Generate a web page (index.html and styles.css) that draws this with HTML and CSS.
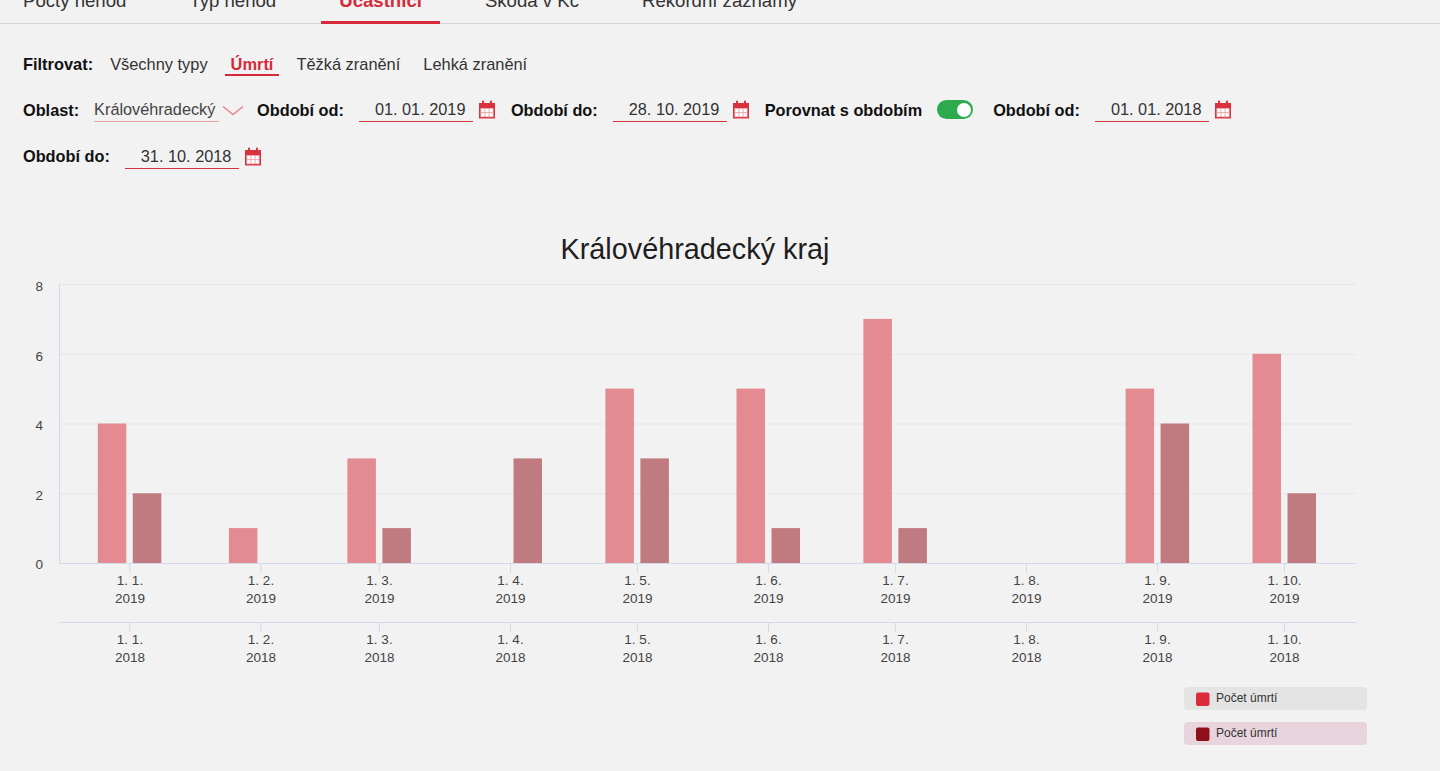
FILE: index.html
```html
<!DOCTYPE html>
<html lang="cs">
<head>
<meta charset="utf-8">
<title>Účastníci</title>
<link rel="stylesheet" href="styles.css">
</head>
<body>
<nav class="tabs">
  <a class="tab"><span>Počty nehod</span></a>
  <a class="tab"><span>Typ nehod</span></a>
  <a class="tab active"><span>Účastníci</span></a>
  <a class="tab"><span>Škoda v Kč</span></a>
  <a class="tab"><span>Rekordní záznamy</span></a>
</nav>

<div class="content">
  <div class="filter">
    <span class="filter-label">Filtrovat:</span>
    <span class="filter-item">Všechny typy</span>
    <span class="filter-item active">Úmrtí</span>
    <span class="filter-item">Těžká zranění</span>
    <span class="filter-item">Lehká zranění</span>
  </div>

  <div class="controls">
    <div class="field">
      <span class="label">Oblast:</span>
      <span class="select-group">
        <span class="select">Královéhradecký</span>
        <svg class="chevron" width="22" height="11" viewBox="0 0 22 11"><polyline points="1,1.5 11,9.5 21,1.5" fill="none" stroke="#e8858e" stroke-width="1.6"/></svg>
      </span>
    </div>

    <div class="field">
      <span class="label">Období od:</span>
      <span class="date-group">
        <span class="date">01. 01. 2019</span>
        <svg class="cal" width="18" height="19" viewBox="0 0 18 19"><use href="#cal"/></svg>
      </span>
    </div>

    <div class="field">
      <span class="label">Období do:</span>
      <span class="date-group">
        <span class="date">28. 10. 2019</span>
        <svg class="cal" width="18" height="19" viewBox="0 0 18 19"><use href="#cal"/></svg>
      </span>
    </div>

    <div class="field">
      <span class="label">Porovnat s obdobím</span>
      <span class="toggle"><span class="knob"></span></span>
    </div>

    <div class="field">
      <span class="label">Období od:</span>
      <span class="date-group">
        <span class="date">01. 01. 2018</span>
        <svg class="cal" width="18" height="19" viewBox="0 0 18 19"><use href="#cal"/></svg>
      </span>
    </div>

    <div class="field">
      <span class="label">Období do:</span>
      <span class="date-group">
        <span class="date">31. 10. 2018</span>
        <svg class="cal" width="18" height="19" viewBox="0 0 18 19"><use href="#cal"/></svg>
      </span>
    </div>
  </div>
</div>

<svg class="defs" width="0" height="0">
  <defs>
    <g id="cal">
      <rect x="1" y="3" width="16" height="15.5" fill="#d9323f"/>
      <rect x="2.3" y="8" width="13.4" height="9.2" fill="#eaa0a6"/>
      <rect x="3.2" y="8.9" width="3.3" height="3.3" fill="#fff"/>
      <rect x="7.35" y="8.9" width="3.3" height="3.3" fill="#fff"/>
      <rect x="11.5" y="8.9" width="3.3" height="3.3" fill="#fff"/>
      <rect x="3.2" y="13.1" width="3.3" height="3.3" fill="#fff"/>
      <rect x="7.35" y="13.1" width="3.3" height="3.3" fill="#fff"/>
      <rect x="11.5" y="13.1" width="3.3" height="3.3" fill="#fff"/>
      <rect x="4" y="0.5" width="2" height="4.5" rx="0.8" fill="#d9323f"/>
      <rect x="12" y="0.5" width="2" height="4.5" rx="0.8" fill="#d9323f"/>
    </g>
  </defs>
</svg>

<svg class="chart" width="1440" height="581" viewBox="0 190 1440 581">
  <text class="title" x="695" y="260" text-anchor="middle">Královéhradecký kraj</text>

  <g class="grid">
    <line x1="59" y1="285.5" x2="1356" y2="285.5"/>
    <line x1="59" y1="355.25" x2="1356" y2="355.25"/>
    <line x1="59" y1="425" x2="1356" y2="425"/>
    <line x1="59" y1="494.75" x2="1356" y2="494.75"/>
  </g>
  <line class="axis" x1="59.5" y1="285" x2="59.5" y2="564"/>

  <g class="ylabels">
    <text x="43" y="292">8</text>
    <text x="43" y="362">6</text>
    <text x="43" y="431">4</text>
    <text x="43" y="501">2</text>
    <text x="43" y="570">0</text>
  </g>

  <g class="s1">
    <rect x="97.8" y="424.5" width="28.5" height="139.5"/>
    <rect x="228.9" y="529.1" width="28.5" height="34.9"/>
    <rect x="347.4" y="459.4" width="28.5" height="104.6"/>
    <rect x="605.4" y="389.6" width="28.5" height="174.4"/>
    <rect x="736.5" y="389.6" width="28.5" height="174.4"/>
    <rect x="863.4" y="319.9" width="28.5" height="244.1"/>
    <rect x="1125.6" y="389.6" width="28.5" height="174.4"/>
    <rect x="1252.5" y="354.75" width="28.5" height="209.25"/>
  </g>
  <g class="s2">
    <rect x="132.8" y="494.25" width="28.5" height="69.75"/>
    <rect x="382.4" y="529.1" width="28.5" height="34.9"/>
    <rect x="513.5" y="459.4" width="28.5" height="104.6"/>
    <rect x="640.4" y="459.4" width="28.5" height="104.6"/>
    <rect x="771.5" y="529.1" width="28.5" height="34.9"/>
    <rect x="898.4" y="529.1" width="28.5" height="34.9"/>
    <rect x="1160.6" y="424.5" width="28.5" height="139.5"/>
    <rect x="1287.5" y="494.25" width="28.5" height="69.75"/>
  </g>

  <line class="axis" x1="59" y1="564.5" x2="1356" y2="564.5"/>
  <line class="axis" x1="59" y1="623.5" x2="1356" y2="623.5"/>

  <g class="ticks">
    <line x1="129.8" y1="564" x2="129.8" y2="574"/>
    <line x1="260.9" y1="564" x2="260.9" y2="574"/>
    <line x1="379.4" y1="564" x2="379.4" y2="574"/>
    <line x1="510.5" y1="564" x2="510.5" y2="574"/>
    <line x1="637.4" y1="564" x2="637.4" y2="574"/>
    <line x1="768.5" y1="564" x2="768.5" y2="574"/>
    <line x1="895.4" y1="564" x2="895.4" y2="574"/>
    <line x1="1026.5" y1="564" x2="1026.5" y2="574"/>
    <line x1="1157.6" y1="564" x2="1157.6" y2="574"/>
    <line x1="1284.5" y1="564" x2="1284.5" y2="574"/>

    <line x1="129.8" y1="623" x2="129.8" y2="633"/>
    <line x1="260.9" y1="623" x2="260.9" y2="633"/>
    <line x1="379.4" y1="623" x2="379.4" y2="633"/>
    <line x1="510.5" y1="623" x2="510.5" y2="633"/>
    <line x1="637.4" y1="623" x2="637.4" y2="633"/>
    <line x1="768.5" y1="623" x2="768.5" y2="633"/>
    <line x1="895.4" y1="623" x2="895.4" y2="633"/>
    <line x1="1026.5" y1="623" x2="1026.5" y2="633"/>
    <line x1="1157.6" y1="623" x2="1157.6" y2="633"/>
    <line x1="1284.5" y1="623" x2="1284.5" y2="633"/>
  </g>

  <g class="xlabels">
    <text x="130" y="585.5">1. 1.</text><text x="130" y="603.5">2019</text>
    <text x="261" y="585.5">1. 2.</text><text x="261" y="603.5">2019</text>
    <text x="379.5" y="585.5">1. 3.</text><text x="379.5" y="603.5">2019</text>
    <text x="510.5" y="585.5">1. 4.</text><text x="510.5" y="603.5">2019</text>
    <text x="637.5" y="585.5">1. 5.</text><text x="637.5" y="603.5">2019</text>
    <text x="768.5" y="585.5">1. 6.</text><text x="768.5" y="603.5">2019</text>
    <text x="895.5" y="585.5">1. 7.</text><text x="895.5" y="603.5">2019</text>
    <text x="1026.5" y="585.5">1. 8.</text><text x="1026.5" y="603.5">2019</text>
    <text x="1157.5" y="585.5">1. 9.</text><text x="1157.5" y="603.5">2019</text>
    <text x="1284.5" y="585.5">1. 10.</text><text x="1284.5" y="603.5">2019</text>

    <text x="130" y="644.5">1. 1.</text><text x="130" y="662.5">2018</text>
    <text x="261" y="644.5">1. 2.</text><text x="261" y="662.5">2018</text>
    <text x="379.5" y="644.5">1. 3.</text><text x="379.5" y="662.5">2018</text>
    <text x="510.5" y="644.5">1. 4.</text><text x="510.5" y="662.5">2018</text>
    <text x="637.5" y="644.5">1. 5.</text><text x="637.5" y="662.5">2018</text>
    <text x="768.5" y="644.5">1. 6.</text><text x="768.5" y="662.5">2018</text>
    <text x="895.5" y="644.5">1. 7.</text><text x="895.5" y="662.5">2018</text>
    <text x="1026.5" y="644.5">1. 8.</text><text x="1026.5" y="662.5">2018</text>
    <text x="1157.5" y="644.5">1. 9.</text><text x="1157.5" y="662.5">2018</text>
    <text x="1284.5" y="644.5">1. 10.</text><text x="1284.5" y="662.5">2018</text>
  </g>

  <g class="legend">
    <rect x="1184" y="688" width="183" height="23" rx="4" fill="#e4e4e4"/>
    <rect x="1196" y="693.5" width="13.5" height="13.5" rx="2" fill="#dc2a3a"/>
    <text x="1216" y="702.5">Počet úmrtí</text>
    <rect x="1184" y="723" width="183" height="23" rx="4" fill="#e7d4dc"/>
    <rect x="1196" y="728.5" width="13.5" height="13.5" rx="2" fill="#8e0e1a"/>
    <text x="1216" y="737.5">Počet úmrtí</text>
  </g>
</svg>
</body>
</html>
```

FILE: styles.css
```css
html, body {
  margin: 0;
  padding: 0;
  background: #f2f2f2;
  font-family: "Liberation Sans", Arial, sans-serif;
  color: #333;
  overflow: hidden;
}

.tabs {
  display: flex;
  gap: 27px;
  padding-left: 5px;
  height: 23px;
  border-bottom: 1px solid #d6d6d6;
}

.tab {
  display: flex;
  align-items: flex-end;
  box-sizing: border-box;
  height: 24px;
  padding: 0 18px 10.5px;
  border-bottom: 3px solid transparent;
  font-size: 18.6px;
  line-height: 20px;
  color: #333;
  white-space: nowrap;
}

.tab.active {
  color: #d42a3a;
  font-weight: bold;
  border-bottom-color: #d42a3a;
}

.content {
  padding-left: 23px;
  padding-right: 23px;
}

.filter {
  display: flex;
  align-items: flex-end;
  gap: 11px;
  margin-top: 31px;
  font-size: 16.4px;
  line-height: 18px;
}

.filter-label {
  font-weight: bold;
  color: #111;
  padding-bottom: 3px;
}

.filter-item {
  padding: 0 6px 1px;
  border-bottom: 2px solid transparent;
  color: #333;
}

.filter-item.active {
  color: #d42a3a;
  font-weight: bold;
  border-bottom-color: #d42a3a;
}

.controls {
  display: flex;
  flex-wrap: wrap;
  align-items: center;
  column-gap: 15px;
  row-gap: 21.5px;
  margin-top: 21px;
  font-size: 16.3px;
  line-height: 24px;
}

.field {
  display: flex;
  align-items: center;
  gap: 15px;
}

.label {
  font-weight: bold;
  color: #111;
  white-space: nowrap;
}

.select-group {
  display: flex;
  align-items: center;
  gap: 3px;
}

.select {
  width: 125px;
  border-bottom: 1.5px solid #eba0a6;
  color: #444;
  white-space: nowrap;
}

.chevron {
  display: block;
  margin-top: 2px;
  margin-right: -2px;
}

.date-group {
  display: flex;
  align-items: center;
  gap: 5px;
}

.date {
  box-sizing: border-box;
  width: 114px;
  padding-left: 16px;
  border-bottom: 1.5px solid #d9323f;
  color: #333;
  white-space: nowrap;
}

.cal {
  display: block;
}

.toggle {
  display: flex;
  align-items: center;
  justify-content: flex-end;
  box-sizing: border-box;
  width: 36px;
  height: 19px;
  padding: 0 2.5px;
  border-radius: 10px;
  background: #2caa4d;
  margin-right: 5px;
}

.knob {
  width: 14px;
  height: 14px;
  border-radius: 50%;
  background: #fff;
}

.defs {
  position: absolute;
  width: 0;
  height: 0;
}

.chart {
  display: block;
  margin-top: 20.5px;
  font-family: "Liberation Sans", Arial, sans-serif;
}

.chart .title {
  font-size: 28.8px;
  fill: #1e1e1e;
}

.chart .grid line {
  stroke: #e6e6e6;
  stroke-width: 1;
}

.chart .axis {
  stroke: #d3d9ea;
  stroke-width: 1;
}

.chart .ticks line {
  stroke: #d3d9ea;
  stroke-width: 1;
}

.chart .ylabels text {
  font-size: 13.5px;
  fill: #444;
  text-anchor: end;
}

.chart .xlabels text {
  font-size: 13.5px;
  fill: #444;
  text-anchor: middle;
}

.chart .s1 rect {
  fill: #e48a91;
}

.chart .s2 rect {
  fill: #bf7b7f;
}

.chart .legend text {
  font-size: 12px;
  fill: #333;
}
```
